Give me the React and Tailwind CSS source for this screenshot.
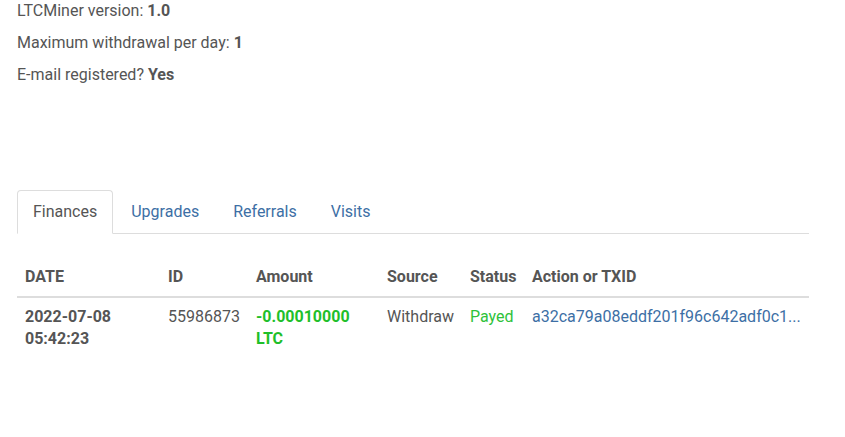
export default function App() {
  const tabs = ['Finances', 'Upgrades', 'Referrals', 'Visits']

  return (
    <div
      className="min-h-screen bg-white text-[16px] leading-[22px] text-[#555]"
      style={{ fontFamily: 'Roboto, "Liberation Sans", sans-serif' }}
    >
      <div className="w-[792px] ml-[17px]">
        {/* Account info */}
        <p className="mb-[10px]">LTCMiner version: <b>1.0</b></p>
        <p className="mb-[10px]">Maximum withdrawal per day: <b>1</b></p>
        <p className="mb-[10px]">E-mail registered? <b>Yes</b></p>

        {/* Tabs */}
        <ul className="mt-[104px] flex border-b border-[#ddd]">
          {tabs.map((t, i) => (
            <li key={t} className="-mb-px mr-[2px]">
              {i === 0 ? (
                <span className="block px-[15px] py-[10px] border border-[#ddd] border-b-transparent rounded-t-[4px] bg-white text-[#555]">
                  {t}
                </span>
              ) : (
                <a href="#" className="block px-[15px] py-[10px] border border-transparent rounded-t-[4px] text-[#3d6fa5]">
                  {t}
                </a>
              )}
            </li>
          ))}
        </ul>

        {/* Finances table */}
        <table className="mt-[24px] w-full table-fixed border-collapse text-left">
          <colgroup>
            <col className="w-[143px]" />
            <col className="w-[88px]" />
            <col className="w-[131px]" />
            <col className="w-[83px]" />
            <col className="w-[62px]" />
            <col />
          </colgroup>
          <thead>
            <tr className="border-b-2 border-[#ddd]">
              <th className="p-2 font-bold">DATE</th>
              <th className="p-2 font-bold">ID</th>
              <th className="p-2 font-bold">Amount</th>
              <th className="p-2 font-bold">Source</th>
              <th className="p-2 font-bold">Status</th>
              <th className="p-2 font-bold whitespace-nowrap">Action or TXID</th>
            </tr>
          </thead>
          <tbody>
            <tr className="align-top">
              <td className="p-2 font-bold">2022-07-08<br />05:42:23</td>
              <td className="p-2">55986873</td>
              <td className="p-2 font-bold text-[#1fbf2a]">-0.00010000<br />LTC</td>
              <td className="p-2">Withdraw</td>
              <td className="p-2 text-[#2ec23a]">Payed</td>
              <td className="p-2 whitespace-nowrap">
                <a href="#" className="text-[#3d6fa5]">a32ca79a08eddf201f96c642adf0c1...</a>
              </td>
            </tr>
          </tbody>
        </table>
      </div>
    </div>
  )
}
